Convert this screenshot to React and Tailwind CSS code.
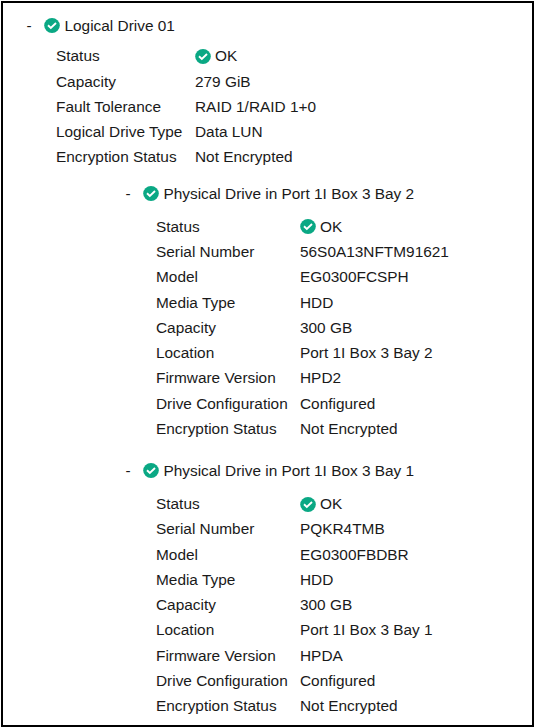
import clsx from "clsx";

const logicalDrive = {
  name: "Logical Drive 01",
  rows: [
    ["Status", "OK"],
    ["Capacity", "279 GiB"],
    ["Fault Tolerance", "RAID 1/RAID 1+0"],
    ["Logical Drive Type", "Data LUN"],
    ["Encryption Status", "Not Encrypted"],
  ],
};

const physicalDrives = [
  {
    name: "Physical Drive in Port 1I Box 3 Bay 2",
    rows: [
      ["Status", "OK"],
      ["Serial Number", "56S0A13NFTM91621"],
      ["Model", "EG0300FCSPH"],
      ["Media Type", "HDD"],
      ["Capacity", "300 GB"],
      ["Location", "Port 1I Box 3 Bay 2"],
      ["Firmware Version", "HPD2"],
      ["Drive Configuration", "Configured"],
      ["Encryption Status", "Not Encrypted"],
    ],
  },
  {
    name: "Physical Drive in Port 1I Box 3 Bay 1",
    rows: [
      ["Status", "OK"],
      ["Serial Number", "PQKR4TMB"],
      ["Model", "EG0300FBDBR"],
      ["Media Type", "HDD"],
      ["Capacity", "300 GB"],
      ["Location", "Port 1I Box 3 Bay 1"],
      ["Firmware Version", "HPDA"],
      ["Drive Configuration", "Configured"],
      ["Encryption Status", "Not Encrypted"],
    ],
  },
];

function StatusOk() {
  return (
    <svg
      viewBox="0 0 16 15"
      preserveAspectRatio="none"
      className="w-4 h-[15px] shrink-0"
    >
      <ellipse cx="8" cy="7.5" rx="7.8" ry="7.4" fill="#0aa884" />
      <path d="M4 7.3 6.8 9.9 12 5" fill="none" stroke="#fff" strokeWidth="1.9" />
    </svg>
  );
}

function DriveHeading({ name }) {
  return (
    <div className="flex items-center h-[25px]">
      <span className="w-[17.4px]">-</span>
      <StatusOk />
      <span className="ml-[4.6px]">{name}</span>
    </div>
  );
}

function DriveDetails({ rows, labelClass }) {
  return (
    <dl>
      {rows.map(([label, value]) => (
        <div key={label} className="flex items-center h-[25.25px]">
          <dt className={clsx("shrink-0", labelClass)}>{label}</dt>
          <dd className="flex items-center gap-1">
            {label === "Status" && <StatusOk />}
            {value}
          </dd>
        </div>
      ))}
    </dl>
  );
}

export default function App() {
  return (
    <div className="w-[535px] h-[728px] bg-white p-px">
      <div className="w-[533px] h-[726px] overflow-hidden border-2 border-black pt-[10px] pl-[23.5px] font-['Liberation_Sans',Arial,sans-serif] text-[15.4px] leading-[18px] text-[#1a1a1a] whitespace-nowrap">
        <DriveHeading name={logicalDrive.name} />
        <div className="ml-[29.5px] pt-[5.8px]">
          <DriveDetails rows={logicalDrive.rows} labelClass="w-[139px]" />
        </div>
        {/* Member drives */}
        <div className="ml-[99px] mt-[11.2px] space-y-[17px]">
          {physicalDrives.map((drive) => (
            <div key={drive.name}>
              <DriveHeading name={drive.name} />
              <div className="ml-[30.5px] pt-[8px]">
                <DriveDetails rows={drive.rows} labelClass="w-[144px]" />
              </div>
            </div>
          ))}
        </div>
      </div>
    </div>
  );
}
